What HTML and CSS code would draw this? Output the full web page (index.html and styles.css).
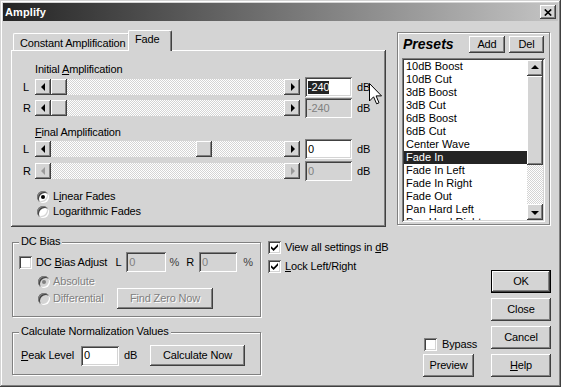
FILE: index.html
```html
<!DOCTYPE html>
<html>
<head>
<meta charset="utf-8">
<title>Amplify</title>
<link rel="stylesheet" href="styles.css">
</head>
<body>
<div class="win">
  <div class="titlebar">
    <span class="title">Amplify</span>
    <span class="xbtn bevel"><svg width="8" height="7" viewBox="0 0 8 7"><path d="M0.8 0.5 L7.2 6.5 M7.2 0.5 L0.8 6.5" stroke="#000" stroke-width="1.7"/></svg></span>
  </div>
  <div class="content">
    <div class="toprow">
      <div class="tabctl">
        <div class="tabstrip">
          <div class="tab">Constant Amplification</div>
          <div class="tab sel">Fade</div>
        </div>
        <div class="panel">
          <div class="lbl">Initial <u>A</u>mplification</div>
          <div class="srow">
            <span class="ch">L</span>
            <div class="hscroll">
              <span class="sbtn bevel"><i class="al"></i></span>
              <span class="strack"><span class="thumb bevel"></span></span>
              <span class="sbtn bevel"><i class="ar"></i></span>
            </div>
            <span class="edit"><span class="hl">-240</span></span>
            <span class="unit">dB</span>
          </div>
          <div class="srow">
            <span class="ch">R</span>
            <div class="hscroll">
              <span class="sbtn bevel"><i class="al"></i></span>
              <span class="strack"><span class="thumb bevel"></span></span>
              <span class="sbtn bevel"><i class="ar"></i></span>
            </div>
            <span class="edit dis">-240</span>
            <span class="unit">dB</span>
          </div>
          <div class="lbl lbl2"><u>F</u>inal Amplification</div>
          <div class="srow first">
            <span class="ch">L</span>
            <div class="hscroll">
              <span class="sbtn bevel"><i class="al"></i></span>
              <span class="strack"><span class="thumb bevel" style="margin-left:145px"></span></span>
              <span class="sbtn bevel"><i class="ar"></i></span>
            </div>
            <span class="edit">0</span>
            <span class="unit">dB</span>
          </div>
          <div class="srow r2">
            <span class="ch">R</span>
            <div class="hscroll">
              <span class="sbtn bevel"><i class="al off"></i></span>
              <span class="strack"></span>
              <span class="sbtn bevel"><i class="ar off"></i></span>
            </div>
            <span class="edit dis">0</span>
            <span class="unit">dB</span>
          </div>
          <div class="rrow rfirst"><span class="radio on"></span><span class="rtext">L<u>i</u>near Fades</span></div>
          <div class="rrow"><span class="radio"></span><span class="rtext">Lo<u>g</u>arithmic Fades</span></div>
        </div>
      </div>
      <div class="presets">
        <div class="phead">
          <span class="ptitle">Presets</span>
          <span class="btn bevel add">Add</span>
          <span class="btn bevel del">Del</span>
        </div>
        <div class="listbox">
          <div class="items">
            <div class="item">10dB Boost</div>
            <div class="item">10dB Cut</div>
            <div class="item">3dB Boost</div>
            <div class="item">3dB Cut</div>
            <div class="item">6dB Boost</div>
            <div class="item">6dB Cut</div>
            <div class="item">Center Wave</div>
            <div class="item sel">Fade In</div>
            <div class="item">Fade In Left</div>
            <div class="item">Fade In Right</div>
            <div class="item">Fade Out</div>
            <div class="item">Pan Hard Left</div>
            <div class="item">Pan Hard Right</div>
          </div>
          <div class="vscroll">
            <span class="sbtn bevel"><i class="au"></i></span>
            <span class="vthumb bevel"></span>
            <span class="vtrack"></span>
            <span class="sbtn bevel"><i class="ad"></i></span>
          </div>
        </div>
      </div>
    </div>
    <div class="botrow">
      <div class="leftcol">
        <div class="group dc">
          <div class="gtitle">DC Bias</div>
          <div class="dcrow">
            <span class="check"></span>
            <span class="dclabel">DC <u>B</u>ias Adjust</span>
            <span class="dcl">L</span>
            <span class="edit dis dce1">0</span>
            <span class="pct">%</span>
            <span class="dcr">R</span>
            <span class="edit dis dce2">0</span>
            <span class="pct pct2">%</span>
          </div>
          <div class="dcradio">
            <span class="radio dis on"></span><span class="rtext distext">Absolute</span>
          </div>
          <div class="dcradio r3">
            <span class="radio dis"></span><span class="rtext distext difflabel">Differential</span>
            <span class="btn bevel fzn distext">Find Zero Now</span>
          </div>
        </div>
        <div class="group calc">
          <div class="gtitle">Calculate Normalization Values</div>
          <div class="calcrow">
            <span class="peak"><u>P</u>eak Level</span>
            <span class="edit peakedit">0</span>
            <span class="unit calcdb">dB</span>
            <span class="btn bevel calcbtn">Calculate Now</span>
          </div>
        </div>
      </div>
      <div class="midcol">
        <div class="crow"><span class="check on"><svg width="7" height="7" viewBox="0 0 7 7"><path d="M0 2.2 L2.6 4.6 L7 0 L7 2.6 L2.6 7 L0 4.6 Z" fill="#000"/></svg></span><span class="ctext">View all settings in <u>d</u>B</span></div>
        <div class="crow"><span class="check on"><svg width="7" height="7" viewBox="0 0 7 7"><path d="M0 2.2 L2.6 4.6 L7 0 L7 2.6 L2.6 7 L0 4.6 Z" fill="#000"/></svg></span><span class="ctext"><u>L</u>ock Left/Right</span></div>
      </div>
      <div class="bpcol">
        <div class="bprow"><span class="check"></span><span class="bptext">Bypass</span></div>
        <span class="btn bevel preview">Preview</span>
      </div>
      <div class="btncol">
        <span class="btn okbtn"><span class="btn bevel okin">OK</span></span>
        <span class="btn bevel rbtn">Close</span>
        <span class="btn bevel rbtn">Cancel</span>
        <span class="btn bevel rbtn"><span><u>H</u>elp</span></span>
      </div>
    </div>
  </div>
  <svg class="cursor" width="13" height="22" viewBox="0 0 13 22"><path d="M0.5 0.5 V18 L4.6 13.8 L7.6 20.8 L10 19.8 L7.1 12.9 H12.5 Z" fill="#fff" stroke="#000" stroke-width="1"/></svg>
</div>
</body>
</html>
```

FILE: styles.css
```css
* { box-sizing: border-box; }
body {
  margin: 0;
  font: 11px/13px "Liberation Sans", Arial, sans-serif;
  letter-spacing: -0.15px;
  color: #000;
  background: #d4d4d4;
}
u { text-decoration: underline; text-underline-offset: 1px; }
.win {
  position: relative;
  width: 561px;
  height: 387px;
  padding: 3px;
  background: #d4d4d4;
  box-shadow: inset -1px -1px #404040, inset 1px 1px #d4d4d4, inset -2px -2px #808080, inset 2px 2px #fff;
  overflow: hidden;
}
.bevel {
  background: #d4d4d4;
  box-shadow: inset -1px -1px #404040, inset 1px 1px #fff, inset -2px -2px #808080, inset 2px 2px #d4d4d4;
}
.titlebar {
  height: 18px;
  display: flex;
  align-items: center;
  justify-content: space-between;
  padding: 0 2px;
  background: linear-gradient(to right, #242424, #c4c4c4);
}
.title { color: #fff; font-weight: bold; letter-spacing: 0.1px; }
.xbtn {
  width: 16px;
  height: 14px;
  display: flex;
  align-items: center;
  justify-content: center;
}
.content { padding: 9px 0 0 8px; }
.toprow { display: flex; align-items: flex-start; height: 197px; }
.tabctl { width: 375px; }
.tabstrip { height: 20px; display: flex; align-items: flex-end; padding-left: 2px; }
.tab {
  height: 17px;
  width: 117px;
  padding: 3px 0 0 6px;
  border-top: 1px solid #fff;
  border-left: 1px solid #fff;
  border-right: 1px solid #404040;
  border-top-left-radius: 2px;
  border-top-right-radius: 2px;
  box-shadow: inset -1px 0 #808080;
  background: #d4d4d4;
}
.tab.sel {
  position: relative;
  z-index: 1;
  width: 44px;
  height: 21px;
  margin-left: -2px;
  margin-bottom: -1px;
  padding: 2px 0 0 6px;
}
.panel {
  height: 177px;
  padding: 13px 0 0 12px;
  box-shadow: inset -1px -1px #404040, inset 1px 1px #fff, inset -2px -2px #808080;
}
.lbl { margin-left: 12px; height: 13px; }
.lbl2 { margin-top: 8px; }
.srow { display: flex; align-items: center; height: 20px; margin-top: 1px; }
.srow.first { margin-top: 0; }
.srow.r2 { margin-top: 2px; }
.ch { width: 12px; }
.hscroll { display: flex; width: 265px; height: 16px; }
.sbtn {
  width: 16px;
  height: 16px;
  flex: none;
  display: flex;
  align-items: center;
  justify-content: center;
}
.strack {
  flex: 1;
  display: flex;
  background: repeating-conic-gradient(#fff 0 25%, #d4d4d4 0 50%) 0 0 / 2px 2px;
}
.thumb { width: 16px; height: 16px; flex: none; }
.al, .ar, .au, .ad { display: block; width: 0; height: 0; }
.al { border-right: 4px solid #000; border-top: 4px solid transparent; border-bottom: 4px solid transparent; margin-left: -1px; }
.ar { border-left: 4px solid #000; border-top: 4px solid transparent; border-bottom: 4px solid transparent; margin-left: 1px; }
.au { border-bottom: 4px solid #000; border-left: 4px solid transparent; border-right: 4px solid transparent; margin-top: -2px; }
.ad { border-top: 4px solid #000; border-left: 4px solid transparent; border-right: 4px solid transparent; margin-top: 1px; }
.al.off { border-right-color: #9a9a9a; }
.ar.off { border-left-color: #9a9a9a; }
.edit {
  width: 47px;
  height: 20px;
  margin-left: 5px;
  padding-left: 3px;
  display: flex;
  align-items: center;
  background: #fff;
  box-shadow: inset 1px 1px #808080, inset -1px -1px #fff, inset 2px 2px #404040, inset -2px -2px #d4d4d4;
}
.edit.dis { background: #d4d4d4; color: #808080; }
.hl { background: #242424; color: #fff; }
.unit { margin-left: 5px; }
.rrow { display: flex; align-items: center; height: 15px; padding-left: 14px; }
.rfirst { margin-top: 8px; }
.radio {
  position: relative;
  width: 12px;
  height: 12px;
  flex: none;
  border-radius: 50%;
  background: #fff;
  box-shadow: inset 1px 1px #808080, inset -1px -1px #fff, inset 2px 2px #404040, inset -2px -2px #d4d4d4;
}
.radio.dis { background: #d4d4d4; }
.radio.on::after {
  content: "";
  position: absolute;
  left: 4px;
  top: 4px;
  width: 4px;
  height: 4px;
  border-radius: 50%;
  background: #000;
}
.radio.dis.on::after { background: #808080; }
.rtext { margin-left: 4px; }
.distext { color: #808080; text-shadow: 1px 1px #fff; }

.presets {
  margin: 2px 0 0 11px;
  width: 153px;
  height: 193px;
  border: 1px solid #808080;
  box-shadow: inset 1px 1px #fff, 1px 1px #fff;
  padding: 3px 4px 2px 4px;
  display: flex;
  flex-direction: column;
}
.phead { display: flex; align-items: center; height: 17px; }
.ptitle { flex: 1; margin-left: 1px; font-size: 14px; font-weight: bold; font-style: italic; letter-spacing: 0; }
.btn { display: flex; align-items: center; justify-content: center; }
.add { width: 36px; height: 17px; margin-right: 4px; }
.del { width: 35px; height: 17px; margin-right: 1px; }
.listbox {
  margin-top: 5px;
  height: 164px;
  padding: 2px;
  display: flex;
  background: #fff;
  box-shadow: inset 1px 1px #808080, inset -1px -1px #fff, inset 2px 2px #404040, inset -2px -2px #d4d4d4;
}
.items { flex: 1; overflow: hidden; }
.item { height: 13px; padding-left: 2px; white-space: nowrap; letter-spacing: 0; }
.item.sel { background: #242424; color: #fff; }
.vscroll { width: 16px; display: flex; flex-direction: column; }
.vthumb { height: 89px; flex: none; }
.vtrack { flex: 1; background: repeating-conic-gradient(#fff 0 25%, #d4d4d4 0 50%) 0 0 / 2px 2px; }

.botrow { display: flex; align-items: flex-start; }
.leftcol { margin: 15px 0 0 1px; width: 249px; }
.group {
  border: 1px solid #808080;
  box-shadow: inset 1px 1px #fff, 1px 1px #fff;
}
.gtitle {
  width: max-content;
  height: 13px;
  margin: -8px 0 0 6px;
  padding: 0 2px;
  background: #d4d4d4;
}
.dc { height: 75px; }
.dcrow { display: flex; align-items: center; height: 20px; margin-top: 4px; padding-left: 6px; }
.check {
  width: 13px;
  height: 13px;
  flex: none;
  display: flex;
  align-items: center;
  justify-content: center;
  background: #fff;
  box-shadow: inset 1px 1px #808080, inset -1px -1px #fff, inset 2px 2px #404040, inset -2px -2px #d4d4d4;
}
.dclabel { width: 81px; margin-left: 4px; }
.dcl { width: 11px; }
.dce1 { width: 40px; margin-left: 0; }
.pct { width: 17px; margin-left: 4px; color: #404040; }
.dcr { width: 13px; }
.dce2 { width: 39px; margin-left: 0; }
.pct2 { margin-left: 6px; }
.dcradio { display: flex; align-items: center; height: 13px; margin-top: 3px; padding-left: 25px; }
.dcradio .rtext { margin-left: 3px; }
.dcradio.r3 { height: 21px; margin-top: 0; }
.difflabel { width: 64px; }
.fzn { width: 96px; height: 21px; }
.calc { height: 43px; margin-top: 15px; }
.calcrow { display: flex; align-items: center; height: 21px; margin-top: 7px; padding-left: 8px; }
.peak { width: 60px; }
.peakedit { width: 38px; margin-left: 0; }
.calcdb { width: 26px; }
.calcbtn { width: 95px; height: 21px; }

.midcol { margin: 11px 0 0 7px; width: 155px; }
.crow { display: flex; align-items: center; height: 19px; }
.ctext { margin-left: 4px; }
.bpcol { width: 51px; margin-top: 110px; display: flex; flex-direction: column; }
.bprow { display: flex; align-items: center; height: 14px; padding-left: 1px; }
.bptext { margin-left: 5px; }
.preview { height: 23px; margin-top: 3px; }
.btncol { margin: 43px 0 0 17px; width: 60px; display: flex; flex-direction: column; gap: 5px; }
.rbtn { height: 23px; }
.okbtn { height: 23px; border: 1px solid #000; }
.okin { width: 100%; height: 100%; }
.cursor { position: absolute; left: 369px; top: 83px; }
```
